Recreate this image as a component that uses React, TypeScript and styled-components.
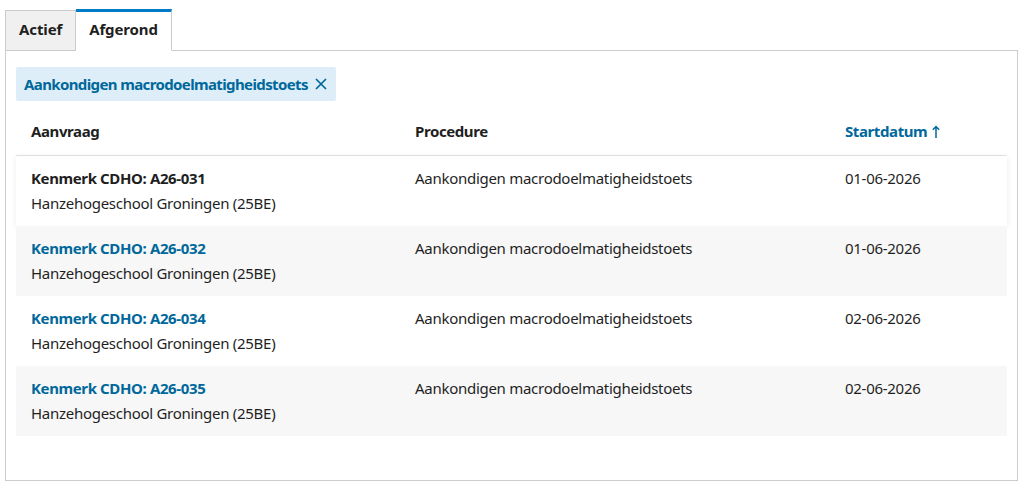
import React from 'react';
import styled, { createGlobalStyle } from 'styled-components';

const GlobalStyle = createGlobalStyle`
  body {
    margin: 0;
    background: #ffffff;
    font-family: "Noto Sans", "Open Sans", sans-serif;
    color: #1f1f1f;
    letter-spacing: -0.28px;
  }
`;

const Page = styled.div`
  padding: 9px 13px 4px 5px;
`;

const TabList = styled.div`
  display: flex;
  align-items: flex-end;
`;

const Tab = styled.button<{ $active?: boolean }>`
  font-family: inherit;
  font-size: 15px;
  font-weight: 700;
  letter-spacing: -0.12px;
  color: #1f1f1f;
  height: ${(p) => (p.$active ? '42px' : '41px')};
  padding: 0 13px ${(p) => (p.$active ? '5px' : '3px')};
  margin-bottom: -1px;
  border: 1px solid #cccccc;
  border-top: ${(p) => (p.$active ? '3px solid #007bc7' : '1px solid #cccccc')};
  border-bottom: ${(p) => (p.$active ? '1px solid #ffffff' : '1px solid #cccccc')};
  background: ${(p) => (p.$active ? '#ffffff' : '#f0f0f0')};
  position: relative;
  z-index: 1;
  cursor: pointer;
  & + & {
    border-left: none;
  }
`;

const Panel = styled.div`
  border: 1px solid #cccccc;
  padding: 16px 10px 44px 10px;
  height: 431px;
  box-sizing: border-box;
`;

const Chip = styled.button`
  display: inline-flex;
  align-items: center;
  gap: 7px;
  height: 34px;
  padding: 0 9px 0 8px;
  border: none;
  border-radius: 2px;
  background: #ddeef8;
  color: #01689b;
  font-family: inherit;
  font-size: 15px;
  font-weight: 700;
  letter-spacing: -0.62px;
  cursor: pointer;
`;

const Table = styled.table`
  width: 100%;
  border-collapse: collapse;
  margin-top: 8px;
  font-size: 15px;
`;

const HeadCell = styled.th<{ $sorted?: boolean; $width?: string }>`
  text-align: left;
  font-weight: 700;
  letter-spacing: -0.4px;
  padding: 0 15px 2px;
  height: 44px;
  width: ${(p) => p.$width || 'auto'};
  color: ${(p) => (p.$sorted ? '#01689b' : '#1f1f1f')};
  border-bottom: 1px solid #e6e6e6;
`;

const SortLabel = styled.span`
  display: inline-flex;
  align-items: center;
  gap: 5px;
`;

const Row = styled.tr<{ $shade: 'white' | 'grey' | 'raised' }>`
  background: ${(p) => (p.$shade === 'grey' ? '#f7f7f7' : '#ffffff')};
  box-shadow: ${(p) => (p.$shade === 'raised' ? '0 1px 6px rgba(0, 0, 0, 0.08)' : 'none')};
  position: relative;
`;

const Cell = styled.td`
  vertical-align: top;
  padding: 10px 15px 0;
  height: 70px;
  box-sizing: border-box;
  line-height: 25px;
`;

const Title = styled.div<{ $link?: boolean }>`
  font-weight: 700;
  letter-spacing: -0.38px;
  color: ${(p) => (p.$link ? '#01689b' : '#1f1f1f')};
`;

const rows = [
  { id: 'A26-031', date: '01-06-2026', link: false, shade: 'raised' as const },
  { id: 'A26-032', date: '01-06-2026', link: true, shade: 'grey' as const },
  { id: 'A26-034', date: '02-06-2026', link: true, shade: 'white' as const },
  { id: 'A26-035', date: '02-06-2026', link: true, shade: 'grey' as const },
];

function CloseIcon() {
  return (
    <svg width="12" height="12" viewBox="0 0 12 12" fill="none" stroke="currentColor" strokeWidth="1.7">
      <path d="M1 1 L11 11 M11 1 L1 11" />
    </svg>
  );
}

function ArrowUpIcon() {
  return (
    <svg width="8" height="13" viewBox="0 0 8 13" fill="none" stroke="currentColor" strokeWidth="1.5">
      <path d="M4 1.5 V13 M0.8 4.7 L4 1.5 L7.2 4.7" />
    </svg>
  );
}

export default function App() {
  return (
    <Page>
      <GlobalStyle />
      <TabList>
        <Tab>Actief</Tab>
        <Tab $active>Afgerond</Tab>
      </TabList>
      <Panel>
        <Chip>
          Aankondigen macrodoelmatigheidstoets
          <CloseIcon />
        </Chip>
        <Table>
          <thead>
            <tr>
              <HeadCell $width="354px">Aanvraag</HeadCell>
              <HeadCell $width="400px">Procedure</HeadCell>
              <HeadCell $sorted>
                <SortLabel>
                  Startdatum
                  <ArrowUpIcon />
                </SortLabel>
              </HeadCell>
            </tr>
          </thead>
          <tbody>
            {rows.map((r) => (
              <Row key={r.id} $shade={r.shade}>
                <Cell>
                  <Title $link={r.link}>Kenmerk CDHO: {r.id}</Title>
                  <div>Hanzehogeschool Groningen (25BE)</div>
                </Cell>
                <Cell>Aankondigen macrodoelmatigheidstoets</Cell>
                <Cell>{r.date}</Cell>
              </Row>
            ))}
          </tbody>
        </Table>
      </Panel>
    </Page>
  );
}
